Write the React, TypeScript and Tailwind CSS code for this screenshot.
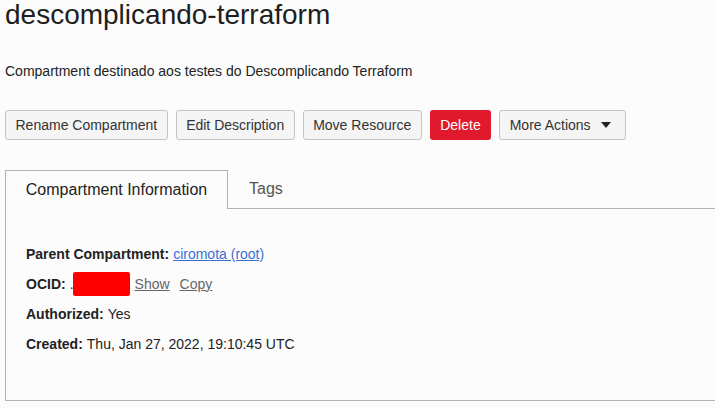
import React from 'react';

const btn =
  'h-[30px] px-[9.5px] rounded-[3px] border border-[#c4c4c4] bg-[#f5f5f5] text-[#333] text-[14px] leading-none flex items-center';

export default function App() {
  return (
    <div className="w-[715px] h-[408px] overflow-hidden bg-[#fcfcfc] font-['Liberation_Sans',Arial,sans-serif] text-[#222]">
      {/* title */}
      <h1 className="pl-[5px] text-[28px] leading-[30px] text-[#1e1e1e]">descomplicando-terraform</h1>
      <p className="pl-[5px] mt-[32px] text-[14px] leading-[18px] text-[#222]">
        Compartment destinado aos testes do Descomplicando Terraform
      </p>

      {/* actions */}
      <div className="pl-[5px] mt-[30px] flex gap-[8px]">
        <button className={btn}>Rename Compartment</button>
        <button className={btn}>Edit Description</button>
        <button className={btn}>Move Resource</button>
        <button className="h-[30px] px-[10.5px] rounded-[3px] bg-[#e0192c] text-white text-[14px] leading-none flex items-center">
          Delete
        </button>
        <button className={`${btn} gap-[10px] pr-[14px]`}>
          More Actions
          <svg width="10" height="6" viewBox="0 0 10 6">
            <path d="M0 0h10L5 6z" fill="#222" />
          </svg>
        </button>
      </div>

      {/* tabs */}
      <div className="ml-[5px] mt-[30px] flex">
        <div className="w-[223px] h-[39px] border-l border-t border-r border-[#b3b3b3] flex items-center justify-center text-[16px] text-[#222]">
          Compartment Information
        </div>
        <div className="flex-1 h-[39px] border-b border-[#b3b3b3] pl-[21px] pt-[10px] text-[16px] leading-[18px] text-[#555]">
          Tags
        </div>
      </div>

      {/* content */}
      <div className="ml-[5px] h-[192px] border-l border-b border-[#b3b3b3] pl-[20px] pt-[30px] text-[14px] text-[#222]">
        <div className="h-[30px] flex items-center">
          <b className="font-bold">Parent Compartment:</b>
          <a className="ml-[4px] text-[#3b6fd4] underline">ciromota (root)</a>
        </div>
        <div className="h-[30px] flex items-center">
          <b className="font-bold">OCID:</b>
          <span className="ml-[4px]">.</span>
          <span className="ml-[-1px] w-[57px] h-[24px] rounded-[2px] bg-[#ff0000]" />
          <a className="ml-[5px] text-[#666] underline">Show</a>
          <a className="ml-[10px] text-[#666] underline">Copy</a>
        </div>
        <div className="h-[30px] flex items-center">
          <b className="font-bold">Authorized:</b>
          <span className="ml-[4px]">Yes</span>
        </div>
        <div className="h-[30px] flex items-center">
          <b className="font-bold">Created:</b>
          <span className="ml-[4px]">Thu, Jan 27, 2022, 19:10:45 UTC</span>
        </div>
      </div>
    </div>
  );
}
